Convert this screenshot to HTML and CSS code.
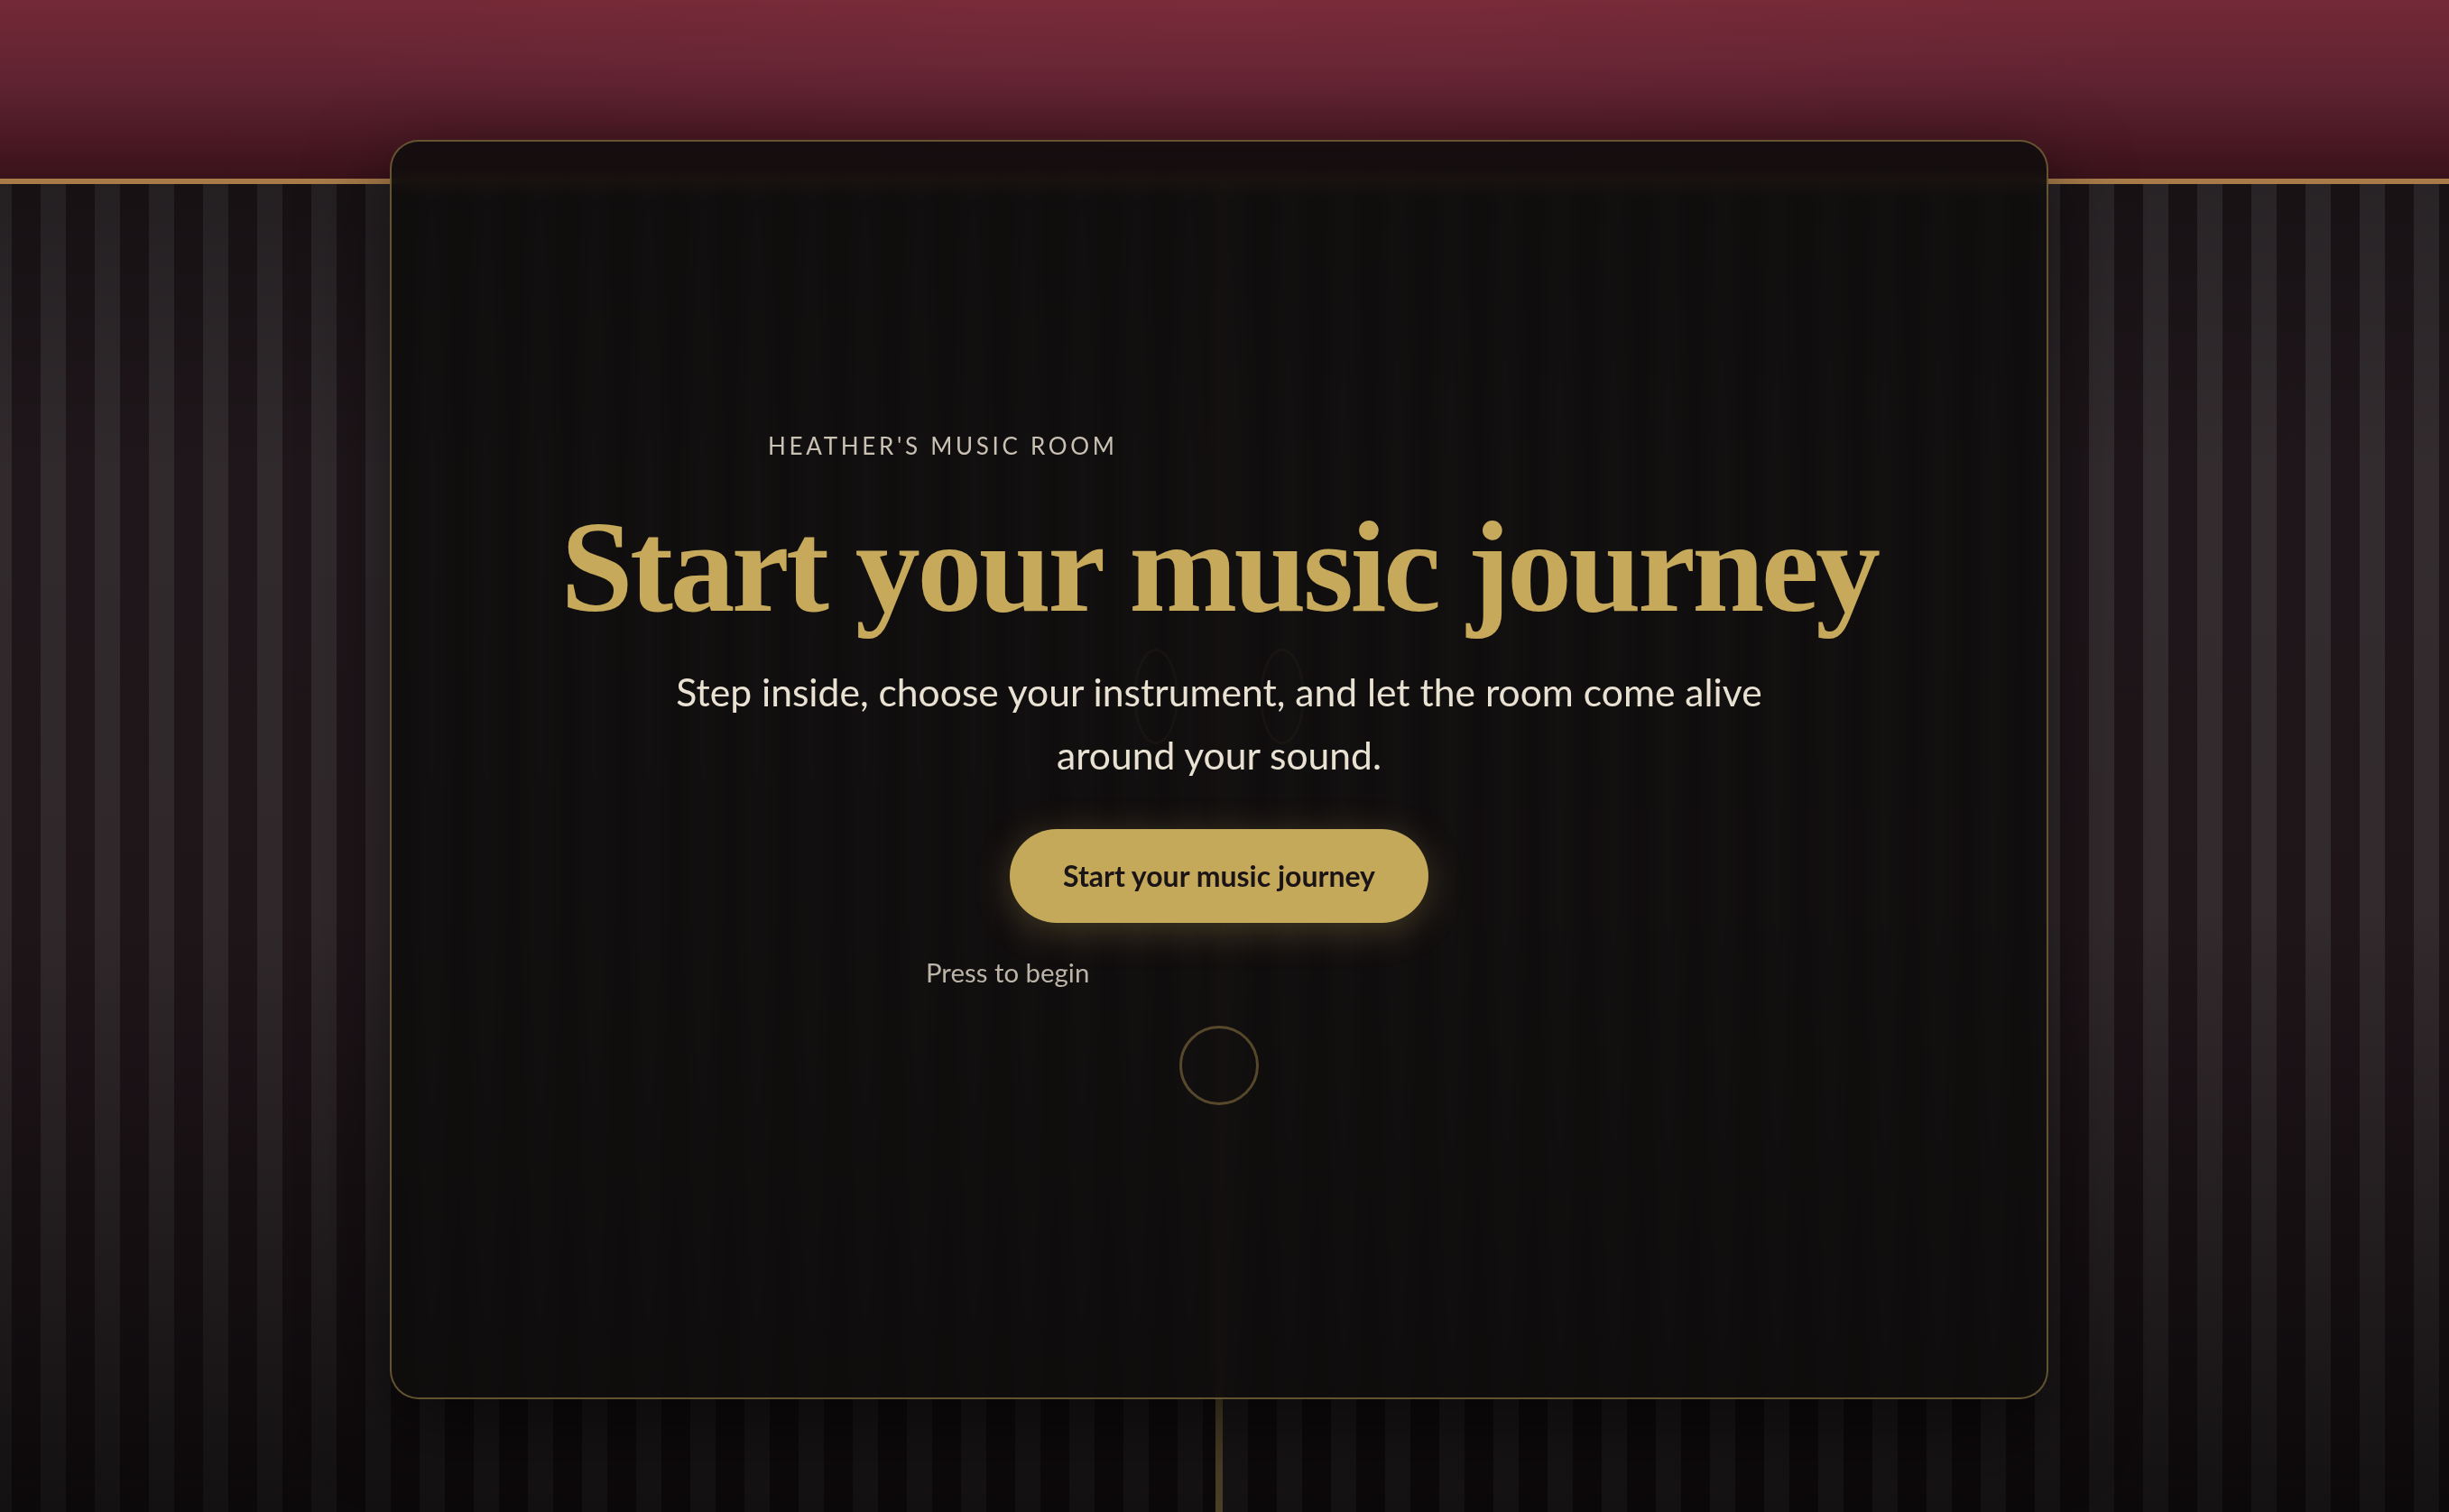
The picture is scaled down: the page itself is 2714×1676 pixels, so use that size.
FILE: index.html
```html
<!DOCTYPE html>
<html lang="en">
<head>
    <meta charset="UTF-8">
    <meta name="viewport" content="width=device-width, initial-scale=1.0">
    <title>Heather's Music Room</title>
    <link rel="stylesheet" href="styles.css">
</head>
<body>
    <!-- the room: valance on top, two curtains below -->
    <div class="stage">
        <div class="valance"></div>
        <div class="curtains">
            <div class="curtain left"></div>
            <div class="curtain right"></div>
        </div>
    </div>

    <div class="overlay">
        <main class="card">
            <div class="ghost"><span></span><span></span></div>
            <div class="content">
                <p class="eyebrow">HEATHER'S MUSIC ROOM</p>
                <h1 class="title">Start your music journey</h1>
                <p class="lead">Step inside, choose your instrument, and let the room come alive around your sound.</p>
                <button class="start-btn" type="button">Start your music journey</button>
                <p class="hint">Press to begin</p>
                <div class="ring"></div>
            </div>
        </main>
    </div>
</body>
</html>
```

FILE: styles.css
```css
html, body {
    margin: 0;
    height: 100%;
}
body {
    position: relative;
    overflow: hidden;
    background: #0c0a0b;
    font-family: Lato, "Noto Sans", sans-serif;
}

.stage {
    height: 100vh;
    display: flex;
    flex-direction: column;
}
.valance {
    flex: none;
    height: 198px;
    background:
        radial-gradient(ellipse 55% 140% at 50% 0%, rgba(150, 55, 72, 0.18), transparent 70%),
        linear-gradient(180deg, #742937 0%, #602331 45%, #3a121a 100%);
    border-bottom: 6px solid #a87b49;
}
.curtains {
    flex: 1;
    position: relative;
    display: grid;
    grid-template-columns: calc(50% - 6px) 1fr;
}
/* gold seam where the curtains meet */
.curtains::after {
    content: "";
    position: absolute;
    top: 0;
    bottom: 0;
    left: calc(50% - 10px);
    width: 8px;
    background: #4b3f26;
}
.curtain {
    height: 100%;
}
.left {
    background-image:
        linear-gradient(180deg, rgba(0, 0, 0, 0.25) 0%, rgba(0, 0, 0, 0) 22%, rgba(40, 0, 10, 0.05) 55%, rgba(0, 0, 0, 0.6) 100%),
        repeating-linear-gradient(90deg, #302a2d 0 13px, #1e161a 13px 45px, #302a2d 45px 60px);
}
.right {
    background-image:
        linear-gradient(180deg, rgba(0, 0, 0, 0.2) 0%, rgba(0, 0, 0, 0) 22%, rgba(40, 0, 10, 0.05) 55%, rgba(0, 0, 0, 0.6) 100%),
        repeating-linear-gradient(90deg, #1e161a 0 4px, #322c2f 4px 32px, #1e161a 32px 60px);
}

.overlay {
    position: absolute;
    inset: 0;
    box-sizing: border-box;
    padding: 155px 12px 0 0;
    display: flex;
    justify-content: center;
    align-items: flex-start;
}
.card {
    position: relative;
    box-sizing: border-box;
    width: 1838px;
    height: 1396px;
    border: 2px solid rgba(199, 169, 91, 0.45);
    border-radius: 32px;
    background: rgba(15, 12, 13, 0.88);
    backdrop-filter: blur(8px);
    box-shadow: 0 30px 90px rgba(0, 0, 0, 0.55);
    display: flex;
    flex-direction: column;
    justify-content: center;
}
/* faint shapes behind the heading */
.ghost {
    position: absolute;
    top: 562px;
    left: 50%;
    transform: translateX(-50%);
    display: flex;
    gap: 90px;
}
.ghost span {
    width: 44px;
    height: 100px;
    border: 3px solid rgba(199, 169, 91, 0.04);
    border-radius: 50%;
}

.content {
    position: relative;
    display: flex;
    flex-direction: column;
    align-items: center;
}
.eyebrow {
    width: 1000px;
    margin: 0;
    font-size: 26px;
    line-height: 1;
    letter-spacing: 0.142em;
    color: #c9c1b3;
}
.title {
    margin: 43px 0 0;
    font-family: "Liberation Serif", "DejaVu Serif", serif;
    font-weight: 700;
    font-size: 144px;
    line-height: 1.1;
    letter-spacing: -0.025em;
    white-space: nowrap;
    color: #c7a95b;
}
.lead {
    max-width: 1270px;
    margin: 23px 0 0;
    font-size: 42.6px;
    line-height: 70px;
    text-align: center;
    color: #e9e2d3;
}
.start-btn {
    margin-top: 47px;
    height: 104px;
    padding: 0 59px;
    border: none;
    border-radius: 52px;
    background: #c5a95b;
    color: #1b1416;
    font-family: Lato, "Noto Sans", sans-serif;
    font-weight: 700;
    font-size: 32px;
    box-shadow: 0 8px 40px rgba(197, 169, 91, 0.28);
    cursor: pointer;
}
.hint {
    width: 650px;
    margin: 37px 0 0;
    font-size: 29.4px;
    line-height: 1.2;
    color: #bcb4a7;
}
.ring {
    box-sizing: border-box;
    width: 88px;
    height: 88px;
    margin-top: 42px;
    border: 3px solid rgba(199, 169, 91, 0.38);
    border-radius: 50%;
}
```
